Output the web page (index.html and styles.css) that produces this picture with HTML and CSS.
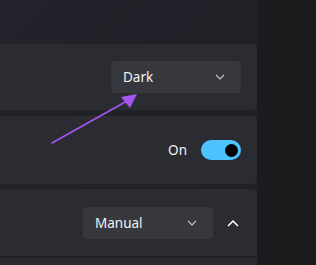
FILE: index.html
```html
<!DOCTYPE html>
<html>
<head>
<meta charset="utf-8">
<link rel="stylesheet" href="styles.css">
</head>
<body>
<div class="page">
  <div class="main">
    <div class="card">
      <div class="select select-dark"><span>Dark</span>
        <svg class="chev" width="10" height="6" viewBox="0 0 10 6"><path d="M1 1 L5 5 L9 1" fill="none" stroke="#c8c8cc" stroke-width="1.1"/></svg>
      </div>
    </div>
    <div class="card card2">
      <span class="label">On</span>
      <div class="toggle"><div class="knob"></div></div>
    </div>
    <div class="card card3">
      <div class="select select-manual"><span>Manual</span>
        <svg class="chev" width="10" height="6" viewBox="0 0 10 6"><path d="M1 1 L5 5 L9 1" fill="none" stroke="#c8c8cc" stroke-width="1.1"/></svg>
      </div>
      <svg class="up" width="12" height="8" viewBox="0 0 12 8"><path d="M1 7 L6 2 L11 7" fill="none" stroke="#ffffff" stroke-width="1.5"/></svg>
    </div>
    <div class="card card4"></div>
  </div>
  <div class="side"></div>
  <svg class="arrow" width="316" height="265" viewBox="0 0 316 265">
    <line x1="52" y1="143" x2="127" y2="101" stroke="#a356f2" stroke-width="1.6" stroke-linecap="round"/>
    <path d="M137 94 L121 97 L130 108 Z" fill="#a356f2"/>
  </svg>
</div>
</body>
</html>
```
FILE: styles.css
```css
* { box-sizing: border-box; }
html, body { margin: 0; padding: 0; }
body {
  width: 316px;
  height: 265px;
  overflow: hidden;
  background: #202127;
  font-family: "Noto Sans", "Open Sans", sans-serif;
  color: #ffffff;
}
.page {
  position: relative;
  display: grid;
  grid-template-columns: 257px 1fr;
  height: 265px;
}
.main {
  display: flex;
  flex-direction: column;
  padding-top: 44px;
  background: linear-gradient(135deg, #22232a 0%, #202127 100%);
}
.side {
  background: #1c1c1f;
}
.card {
  background: #2b2c32;
  border-radius: 0 5px 5px 0;
  height: 66px;
  display: flex;
  align-items: center;
  justify-content: flex-end;
  padding-right: 16px;
  flex-shrink: 0;
}
.card2 {
  margin-top: 6px;
  height: 68px;
}
.card3 {
  margin-top: 5px;
  height: 67px;
  border-radius: 0 5px 0 0;
  padding-right: 18px;
}
.card4 {
  margin-top: 2px;
  height: 20px;
  border-radius: 0;
}
.select {
  width: 130px;
  height: 32px;
  background: #37383d;
  border-radius: 4px;
  display: flex;
  align-items: center;
  justify-content: space-between;
  padding: 0 16px 0 12px;
  font-size: 13.5px;
  color: #f2f2f2;
}
.chev { display: block; }
.label {
  font-size: 13.5px;
  margin-right: 14px;
  color: #f2f2f2;
}
.toggle {
  width: 40px;
  height: 20px;
  border-radius: 10px;
  background: #4cc2ff;
  display: flex;
  align-items: center;
  justify-content: flex-end;
  padding-right: 3px;
}
.knob {
  width: 13px;
  height: 13px;
  border-radius: 50%;
  background: #000000;
}
.up {
  display: block;
  margin-left: 14px;
}
.arrow {
  position: absolute;
  left: 0;
  top: 0;
  pointer-events: none;
}
```
